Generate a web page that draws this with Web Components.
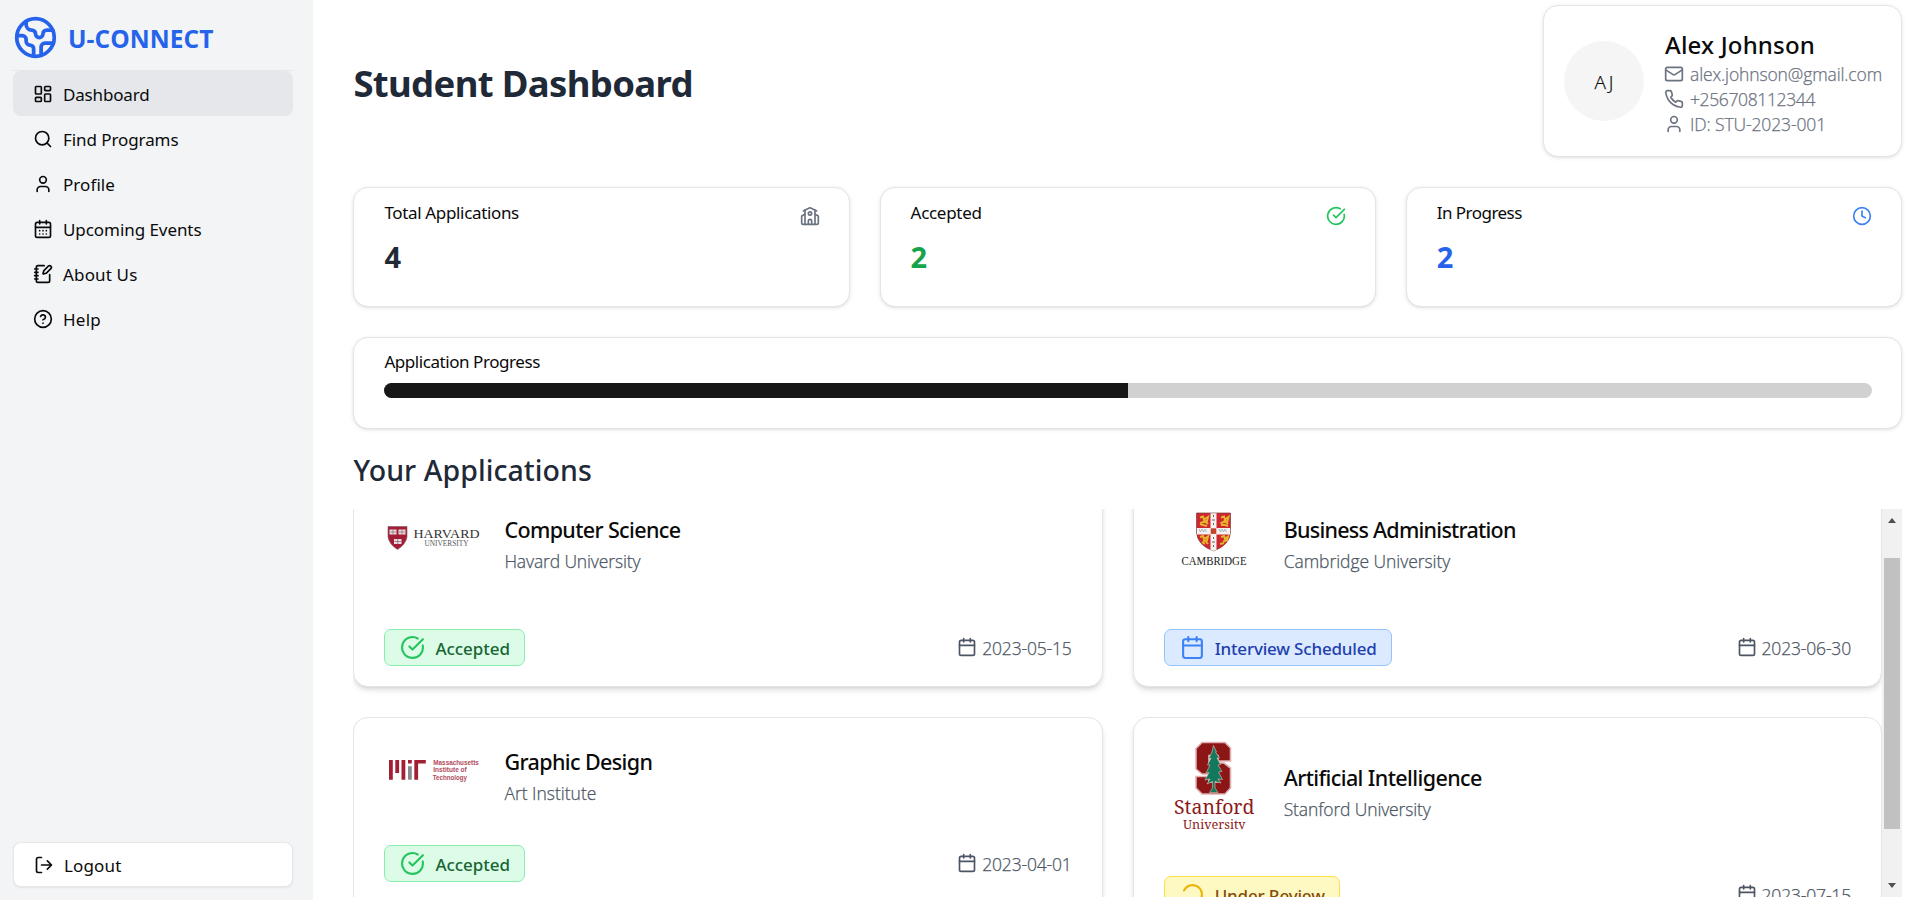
<!DOCTYPE html>
<html lang="en">
<head>
<meta charset="utf-8">
<title>U-CONNECT</title>
<style>
html,body{margin:0;height:100%;overflow:hidden;background:#fff;color:#0a0a0a;font-family:"Noto Sans","Open Sans",sans-serif;font-size:17px}
</style>
</head>
<body>
<app-shell></app-shell>
<script>
const ICONS={
earth:'<path d="M21.54 15H17a2 2 0 0 0-2 2v4.54"/><path d="M7 3.34V5a3 3 0 0 0 3 3a2 2 0 0 1 2 2c0 1.1.9 2 2 2a2 2 0 0 0 2-2c0-1.1.9-2 2-2h3.17"/><path d="M11 21.95V18a2 2 0 0 0-2-2a2 2 0 0 1-2-2v-1a2 2 0 0 0-2-2H2.05"/><circle cx="12" cy="12" r="10"/>',
dashboard:'<rect width="7" height="9" x="3" y="3" rx="1"/><rect width="7" height="5" x="14" y="3" rx="1"/><rect width="7" height="9" x="14" y="12" rx="1"/><rect width="7" height="5" x="3" y="16" rx="1"/>',
search:'<circle cx="11" cy="11" r="8"/><path d="m21 21-4.3-4.3"/>',
user:'<path d="M19 21v-2a4 4 0 0 0-4-4H9a4 4 0 0 0-4 4v2"/><circle cx="12" cy="7" r="4"/>',
days:'<path d="M8 2v4M16 2v4"/><rect width="18" height="18" x="3" y="4" rx="2"/><path d="M3 10h18M8 14h.01M12 14h.01M16 14h.01M8 18h.01M12 18h.01M16 18h.01"/>',
notebook:'<path d="M13.4 2H6a2 2 0 0 0-2 2v16a2 2 0 0 0 2 2h12a2 2 0 0 0 2-2v-7.4"/><path d="M2 6h4M2 10h4M2 14h4M2 18h4"/><path d="M21.378 5.626a1 1 0 1 0-3.004-3.004l-5.01 5.012a2 2 0 0 0-.506.854l-.837 2.87a.5.5 0 0 0 .62.62l2.87-.837a2 2 0 0 0 .854-.506z"/>',
help:'<circle cx="12" cy="12" r="10"/><path d="M9.09 9a3 3 0 0 1 5.83 1c0 2-3 3-3 3"/><path d="M12 17h.01"/>',
logout:'<path d="M9 21H5a2 2 0 0 1-2-2V5a2 2 0 0 1 2-2h4"/><path d="m16 17 5-5-5-5M21 12H9"/>',
mail:'<rect width="20" height="16" x="2" y="4" rx="2"/><path d="m22 7-8.97 5.7a1.94 1.94 0 0 1-2.06 0L2 7"/>',
phone:'<path d="M22 16.92v3a2 2 0 0 1-2.18 2 19.79 19.79 0 0 1-8.63-3.07 19.5 19.5 0 0 1-6-6 19.79 19.79 0 0 1-3.07-8.67A2 2 0 0 1 4.11 2h3a2 2 0 0 1 2 1.72 12.84 12.84 0 0 0 .7 2.81 2 2 0 0 1-.45 2.11L8.09 9.91a16 16 0 0 0 6 6l1.27-1.27a2 2 0 0 1 2.11-.45 12.84 12.84 0 0 0 2.81.7A2 2 0 0 1 22 16.92z"/>',
school:'<path d="M14 22v-4a2 2 0 1 0-4 0v4"/><path d="m18 10 3.447 1.724a1 1 0 0 1 .553.894V20a2 2 0 0 1-2 2H4a2 2 0 0 1-2-2v-7.382a1 1 0 0 1 .553-.894L6 10"/><path d="M18 5v17"/><path d="m4 6 7.106-3.553a2 2 0 0 1 1.788 0L20 6"/><path d="M6 5v17"/><circle cx="12" cy="9" r="2"/>',
check:'<path d="M21.801 10A10 10 0 1 1 17 3.335"/><path d="m9 11 3 3L22 4"/>',
clock:'<circle cx="12" cy="12" r="10"/><path d="M12 6v6l4 2"/>',
calendar:'<path d="M8 2v4M16 2v4"/><rect width="18" height="18" x="3" y="4" rx="2"/><path d="M3 10h18"/>',
loader:'<path d="M21 12a9 9 0 1 1-6.219-8.56" transform="rotate(205 12 12)"/>'
};
const LOGOS={
harvard:`<path d="M4 32.500H23V43Q22 50 13.500 55.500Q5 50 4 43Z" fill="#a51c36" stroke="#7b5560" stroke-width=".6"/><g fill="#e8dce0"><path d="M5.500 35.500h7v5h-7zM14.500 35.500h7v5h-7zM10 45h7.500v5H10z"/></g><g stroke="#8a6670" stroke-width=".7"><path d="M9 35.500v5M18 35.500v5M13.700 45v5M6 38h6M15 38h6M10.500 47.500h6.500"/></g>
<text x="29.500" y="44" font-family="Liberation Serif" font-size="13" lengthAdjust="spacingAndGlyphs" textLength="66" fill="#333">HARVARD</text><text x="40.500" y="52.200" font-family="Liberation Serif" font-size="8.200" lengthAdjust="spacingAndGlyphs" textLength="44" fill="#555">UNIVERSITY</text>`,
cambridge:`<path d="M32.500 19H66.500V38Q66 51 49.500 57Q33 51 32.500 38Z" fill="#cf2630" stroke="#74423a" stroke-width=".7"/><g fill="none" stroke="#e5b62c" stroke-width="2"><path d="M36 23.500l3-1 1 3 4-2.500-1 4-4 1-3 1.500M36 30l3 1 4 1M40 26l4 4M57 23.500l3-1 1 3 3.500-2.500-1 4-4 1-3 1.500M57 31l4 0 3 1M60 26l4 4M36 43l3-1 1 3 4-2.500-1 4-4 1M40 45l4 5M38 48l3 2M57 43l3-1 1 3 3-2.500-1 4-4 1M56 50l4-1"/></g><path d="M46.500 19.300h6V56l-3 1-3-1zM32.800 34h33.400v6.500H33z" fill="#f4f1ee"/><path d="M35 35l1.500 3 1.500-3 1.500 3 1.500-3 1.500 3M55 35l1.500 3 1.500-3 1.500 3 1.500-3 1.500 3" fill="none" stroke="#9eb1c6" stroke-width=".9"/><path d="M49.500 21v2M48 26h3M49.500 29v2M49.500 43v2M48 48h3M49.500 51v2" stroke="#555" stroke-width=".9"/><path d="M46.700 34.300h5.600v5.600h-5.600z" fill="#c4442a"/>
<text x="17.500" y="70.500" font-family="Liberation Serif" font-size="12" lengthAdjust="spacingAndGlyphs" textLength="65" fill="#222">CAMBRIDGE</text>`,
mit:`<g fill="#a31f34"><path d="M5 17h3.800v19.700H5zM11.300 17h3.800v13h-3.800zM17.500 17h3.800v19.700h-3.800zM24 17h3.800v3.600H24zM30.300 17h3.800v19.700h-3.800zM30.300 17h11.500v3.600H30.300z"/></g><path d="M24 23.200h3.800v13.500H24z" fill="#8a8b8c"/>
<g font-family="Liberation Sans" font-weight="bold" font-size="6.600" fill="#b04a5b"><text x="49.300" y="21.600" lengthAdjust="spacingAndGlyphs" textLength="45.500">Massachusetts</text><text x="49.300" y="29" lengthAdjust="spacingAndGlyphs" textLength="33.500">Institute of</text><text x="48.800" y="36.600" lengthAdjust="spacingAndGlyphs" textLength="34">Technology</text></g>`,
stanford:`<path d="M38-.500H61L66.500 5V18H54V12.500H45V20H60L66.500 25V45L61 51H38L32 45V33.500H45V39H54V31H38L32 26V5.500Z" fill="#8c1515" stroke="#dfb0b4" stroke-width="1.600"/><path d="M49.500 2.500L52.500 9 51.500 9 55.500 15 53 15 56.500 21.500 54 22 58 28.500 54.500 29 58.500 36.500 54 36 57 40 51 38.500 51 45 54 49.500H45.500L48.500 45V38.500L43 41 46 36 41 37 45 29.500 42 30 46 22 43.500 22 47 15 44.500 16 48 9Z" fill="#12795d" stroke="#e3c4bd" stroke-width=".6"/>
<text x="10" y="70.500" font-family="Noto Serif,DejaVu Serif,Liberation Serif" font-size="19" lengthAdjust="spacingAndGlyphs" textLength="80.500" fill="#8c1a20">Stanford</text><svg x="0" y="72" width="100" height="14.300"><text x="19" y="14" font-family="Noto Serif,DejaVu Serif,Liberation Serif" font-size="13" lengthAdjust="spacingAndGlyphs" textLength="62.500" fill="#8c1a20">University</text></svg>`
};
class Base extends HTMLElement{
 constructor(){super();this.attachShadow({mode:'open'})}
 a(n){return this.getAttribute(n)||''}
 connectedCallback(){this.shadowRoot.innerHTML=this.view()}
}
customElements.define('ui-icon',class extends Base{
 view(){return `<style>:host{display:block;flex:none}svg{display:block}</style><svg width="${this.a('size')||20}" height="${this.a('size')||20}" viewBox="0 0 24 24" fill="none" stroke="currentColor" stroke-width="${this.a('sw')||2}" stroke-linecap="round" stroke-linejoin="round">${ICONS[this.a('name')]}</svg>`}
});
/* Single-line label tracked to occupy the width given in "w". */
customElements.define('ui-text',class extends Base{
 view(){return `<style>:host{display:block;white-space:nowrap;flex:none}span{display:inline-block}:host([light]){font-family:"Open Sans",sans-serif;font-size:17.500px;font-weight:300;-webkit-text-stroke:.25px currentColor}</style><span><slot></slot></span>`}
 connectedCallback(){super.connectedCallback();
  const w=+this.a('w'),s=this.shadowRoot.querySelector('span');
  if(w)s.style.letterSpacing=((w-s.getBoundingClientRect().width)/Math.max(1,this.textContent.length))+'px'}
});
customElements.define('nav-item',class extends Base{
 view(){return `<style>:host{display:flex;align-items:center;gap:10px;height:45px;padding-left:20px;border-radius:8px;box-sizing:border-box}:host([active]){background:#e5e7eb}ui-text{padding-top:1px}</style><ui-icon name="${this.a('icon')}"></ui-icon><ui-text w="${this.a('w')}">${this.a('label')}</ui-text>`}
});
customElements.define('side-bar',class extends Base{
 view(){return `<style>:host{display:flex;flex-direction:column;width:313px;height:900px;box-sizing:border-box;padding:0 20px 13px 13px;background:#f3f4f6;font-weight:450}
.brand{display:flex;align-items:center;gap:10px;height:71px;box-sizing:border-box;padding:5px 0 0;color:#2563eb;border-bottom:1px solid #e5e7eb}.brand ui-text{font-family:"Open Sans";font-size:24.500px;font-weight:700;padding-top:1px}
nav{flex:1}.out{display:flex;align-items:center;gap:10px;height:45px;box-sizing:border-box;padding-left:20px;border:1px solid #e5e7eb;border-radius:8px;background:#fff;box-shadow:0 1px 2px #0001}.out ui-text{padding-top:1px}</style>
<div class="brand"><ui-icon name="earth" size="45"></ui-icon><ui-text w="145.500">U-CONNECT</ui-text></div>
<nav><nav-item active icon="dashboard" label="Dashboard" w="86.500"></nav-item><nav-item icon="search" label="Find Programs" w="115.500"></nav-item><nav-item icon="user" label="Profile" w="52"></nav-item><nav-item icon="days" label="Upcoming Events" w="138.500"></nav-item><nav-item icon="notebook" label="About Us" w="74.500"></nav-item><nav-item icon="help" label="Help" w="38"></nav-item></nav>
<div class="out"><ui-icon name="logout"></ui-icon><ui-text w="57.500">Logout</ui-text></div>`}
});
customElements.define('ui-card',class extends Base{
 view(){return `<style>:host{display:block;box-sizing:border-box;border:1px solid #e5e5e5;border-radius:15px;background:#fff;box-shadow:0 1px 4px rgba(0,0,0,.1),0 1px 2px -1px rgba(0,0,0,.1)}</style><slot></slot>`}
});
customElements.define('user-card',class extends Base{
 view(){return `<style>ui-card{width:359px;height:152px;padding:20px 0 0 20px}.r{display:flex;gap:20px}.av{width:80px;height:80px;margin-top:15px;border-radius:50%;background:#f5f5f5;display:flex;align-items:center;justify-content:center}.av ui-text{font-size:19px;padding:1px 0 0 3px}
.n{font-size:24px;line-height:35px;font-weight:500;margin:1px 0 0 1px;height:34px}.l{display:flex;align-items:center;gap:6px;height:25px;color:#6b7280}.l ui-text{padding-top:1px}</style>
<ui-card><div class="r"><div class="av"><ui-text light w="22">AJ</ui-text></div><div><div class="n"><ui-text w="150">Alex Johnson</ui-text></div>
<div class="l"><ui-icon name="mail"></ui-icon><ui-text light w="192">alex.johnson@gmail.com</ui-text></div><div class="l"><ui-icon name="phone"></ui-icon><ui-text light w="125">+256708112344</ui-text></div><div class="l"><ui-icon name="user"></ui-icon><ui-text light w="136">ID: STU-2023-001</ui-text></div></div></div></ui-card>`}
});
customElements.define('stat-card',class extends Base{
 view(){return `<style>ui-card{height:120px;padding:13px 29px 0 30px}.h{display:flex;justify-content:space-between;line-height:23px;height:29px;font-weight:450;font-size:17px}ui-icon{margin-top:5px;color:${this.a('ic')}}.v{margin-top:9px;font-size:29px;line-height:36px;font-weight:700;color:${this.a('vc')}}</style>
<ui-card><div class="h"><ui-text w="${this.a('w')}">${this.a('label')}</ui-text><ui-icon name="${this.a('icon')}"></ui-icon></div><div class="v">${this.a('value')}</div></ui-card>`}
});
customElements.define('progress-card',class extends Base{
 view(){return `<style>ui-card{height:92px;padding:12px 29px 0 30px}ui-text{line-height:24px;font-weight:450;font-size:17px}.t{margin-top:9px;height:15px;border-radius:8px;background:#d1d1d1;overflow:hidden}.f{width:50%;height:100%;background:#171717}</style><ui-card><ui-text w="155.500">Application Progress</ui-text><div class="t"><div class="f"></div></div></ui-card>`}
});
customElements.define('uni-logo',class extends Base{
 view(){return `<style>:host{display:block;flex:none;width:100px}svg{display:block;overflow:visible}svg svg{overflow:hidden}</style><svg width="100" height="${this.a('h')}">${LOGOS[this.a('name')]}</svg>`}
});
const KINDS={accepted:['#dcfce7','#86efac','#166534','#22c55e','check','Accepted',74.5],interview:['#dbeafe','#93c5fd','#1e40af','#3b82f6','calendar','Interview Scheduled',162],review:['#fef9c3','#fde047','#854d0e','#eab308','loader','Under Review',110]};
customElements.define('status-badge',class extends Base{
 view(){const k=KINDS[this.a('kind')];return `<style>:host{display:flex;align-items:center;height:37px;box-sizing:border-box;padding:0 14px 0 15px;gap:10px;border:1px solid ${k[1]};border-radius:7px;background:${k[0]};color:${k[2]};font-weight:500}ui-icon{color:${k[3]}}ui-text{padding-top:1px}</style><ui-icon size="25" name="${k[4]}"></ui-icon><ui-text w="${k[6]}">${k[5]}</ui-text>`}
});
customElements.define('application-card',class extends Base{
 view(){return `<style>:host{display:block}ui-card{height:100%;padding:25px 30px 20px;box-shadow:0 4px 6px -1px rgba(0,0,0,.12),0 2px 4px -2px rgba(0,0,0,.12)}.h{display:flex;gap:20px;align-items:center;height:${this.a('h')}px;margin-bottom:30px}.x{padding-bottom:4px}.t{font-size:21.500px;line-height:28px;font-weight:500;margin-bottom:5px}.s{line-height:25px;color:#4b5563}.b{display:flex;justify-content:space-between;align-items:center}.d{display:flex;align-items:center;gap:5px;color:#4b5563}.d ui-icon{margin-top:-2px}.d ui-text{padding-top:1px}</style>
<ui-card><div class="h"><uni-logo name="${this.a('logo')}" h="${this.a('h')}"></uni-logo><div class="x"><ui-text class="t" w="${this.a('tw')}">${this.a('title')}</ui-text><ui-text light class="s" w="${this.a('sw')}">${this.a('school')}</ui-text></div></div>
<div class="b"><status-badge kind="${this.a('kind')}"></status-badge><div class="d"><ui-icon name="calendar"></ui-icon><ui-text light w="89.500">${this.a('date')}</ui-text></div></div></ui-card>`}
});
customElements.define('scroll-rail',class extends Base{
 view(){return `<style>:host{display:flex;flex-direction:column;align-items:center;width:20px;height:100%;background:#f1f1f1;box-sizing:border-box;padding:9px 0}.th{width:16px;height:271px;background:#c1c1c1;margin-top:35px}.u,.d{border:4.500px solid transparent;border-top:0;border-bottom:5px solid #505050}.d{border-bottom:0;border-top:5px solid #505050;margin-top:auto}</style><div class="u"></div><div class="th"></div><div class="d"></div>`}
});
customElements.define('app-list',class extends Base{
 view(){return `<style>:host{display:flex;height:388px;overflow:hidden}.g{flex:1;display:grid;grid-template-columns:1fr 1fr;gap:31px 30px;grid-template-rows:219px 249px;row-gap:30px;margin-top:-41px;height:498px}</style><div class="g">
<application-card h="105" logo="harvard" title="Computer Science" tw="176" school="Havard University" sw="136" kind="accepted" date="2023-05-15"></application-card>
<application-card h="105" logo="cambridge" title="Business Administration" tw="232" school="Cambridge University" sw="166.500" kind="interview" date="2023-06-30"></application-card>
<application-card h="72" logo="mit" title="Graphic Design" tw="148" school="Art Institute" sw="92" kind="accepted" date="2023-04-01"></application-card>
<application-card h="103" logo="stanford" title="Artificial Intelligence" tw="198" school="Stanford University" sw="147" kind="review" date="2023-07-15"></application-card></div><scroll-rail></scroll-rail>`}
});
customElements.define('app-shell',class extends Base{
 view(){return `<style>:host{display:flex;height:900px}main{flex:1;padding:5px 5px 0 40.400px;display:flex;flex-direction:column}header{display:flex;justify-content:space-between}h1{margin:52px 0 0;font-size:36.500px;line-height:52px;font-weight:700;color:#1f2937}.s{display:grid;grid-template-columns:repeat(3,1fr);gap:30px;margin:30px 0}h2{margin:24px 0 0;height:56px;font-size:28.500px;line-height:34px;font-weight:500;color:#1f2937}</style>
<side-bar></side-bar><main><header><h1><ui-text w="339.500">Student Dashboard</ui-text></h1><user-card></user-card></header>
<div class="s"><stat-card label="Total Applications" value="4" w="134.500" icon="school" ic="#6b7280" vc="#1f2937"></stat-card><stat-card label="Accepted" value="2" w="71" icon="check" ic="#22c55e" vc="#16a34a"></stat-card><stat-card label="In Progress" value="2" w="85" icon="clock" ic="#3b82f6" vc="#2563eb"></stat-card></div>
<progress-card></progress-card><h2><ui-text w="238.500">Your Applications</ui-text></h2><app-list></app-list></main>`}
});
</script>
</body>
</html>
